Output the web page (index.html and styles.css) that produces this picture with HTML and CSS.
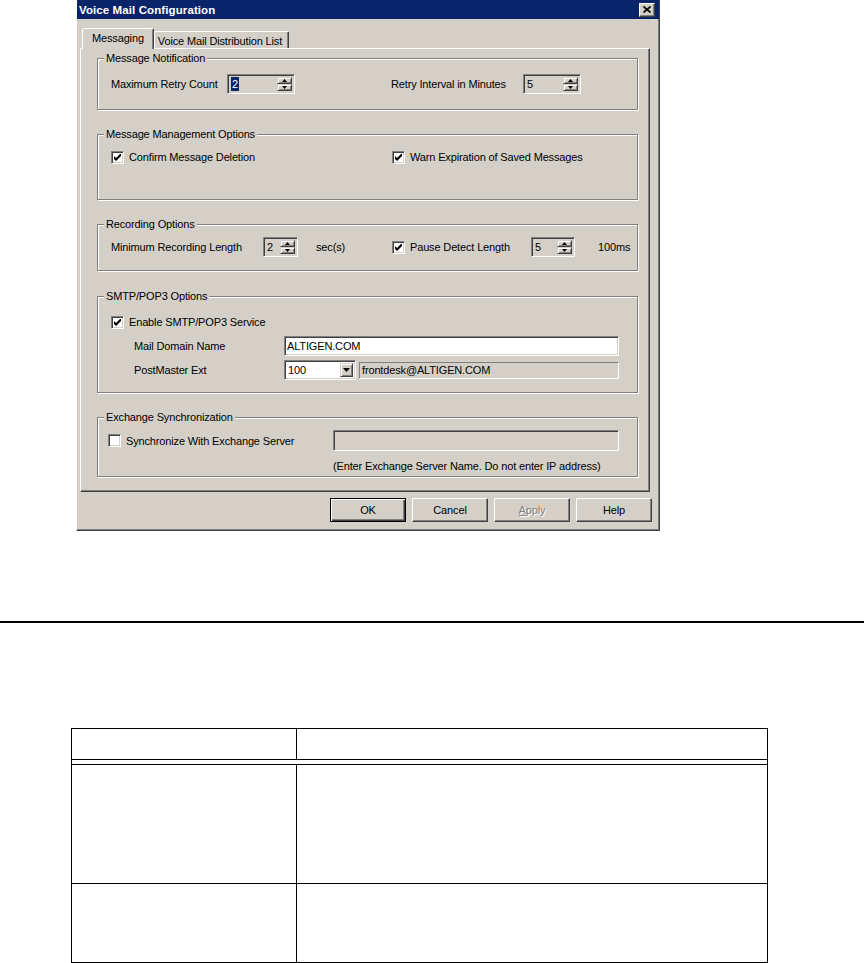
FILE: index.html
```html
<!DOCTYPE html>
<html lang="en">
<head>
  <meta charset="UTF-8">
  <title>Voice Mail Configuration</title>
  <link rel="stylesheet" href="styles.css">
</head>
<body>

<div class="dialog">
  <div class="titlebar">
    <span class="title">Voice Mail Configuration</span>
    <span class="close"><svg width="8" height="7" viewBox="0 0 8 7"><path d="M0.5 0.5L7.5 6.5M7.5 0.5L0.5 6.5" stroke="#000" stroke-width="1.7"/></svg></span>
  </div>

  <div class="tabs">
    <span class="tab active">Messaging</span>
    <span class="tab">Voice Mail Distribution List</span>
  </div>

  <div class="panel">
    <!-- Message Notification -->
    <div class="group g1">
      <span class="legend">Message Notification</span>
      <div class="row">
        <span class="retry-lbl">Maximum Retry Count</span>
        <span class="spin retry-spin">
          <span class="val"><span class="sel">2</span></span>
          <span class="arrows">
            <span class="sb"><svg width="5" height="3" viewBox="0 0 5 3"><path d="M0 3L2.5 0L5 3Z"/></svg></span>
            <span class="sb"><svg width="5" height="3" viewBox="0 0 5 3"><path d="M0 0L5 0L2.5 3Z"/></svg></span>
          </span>
        </span>
        <span class="interval-lbl">Retry Interval in Minutes</span>
        <span class="spin interval-spin">
          <span class="val">5</span>
          <span class="arrows">
            <span class="sb"><svg width="5" height="3" viewBox="0 0 5 3"><path d="M0 3L2.5 0L5 3Z"/></svg></span>
            <span class="sb"><svg width="5" height="3" viewBox="0 0 5 3"><path d="M0 0L5 0L2.5 3Z"/></svg></span>
          </span>
        </span>
      </div>
    </div>

    <!-- Message Management Options -->
    <div class="group g2">
      <span class="legend">Message Management Options</span>
      <div class="row">
        <span class="chk confirm">
          <span class="cb"><svg width="7" height="7" viewBox="0 0 7 7"><path d="M0 2L2 4L7 -1L7 2L2 7L0 5Z"/></svg></span>
          Confirm Message Deletion
        </span>
        <span class="chk">
          <span class="cb"><svg width="7" height="7" viewBox="0 0 7 7"><path d="M0 2L2 4L7 -1L7 2L2 7L0 5Z"/></svg></span>
          Warn Expiration of Saved Messages
        </span>
      </div>
    </div>

    <!-- Recording Options -->
    <div class="group g3">
      <span class="legend">Recording Options</span>
      <div class="row">
        <span class="minrec-lbl">Minimum Recording Length</span>
        <span class="spin minrec-spin">
          <span class="val">2</span>
          <span class="arrows">
            <span class="sb"><svg width="5" height="3" viewBox="0 0 5 3"><path d="M0 3L2.5 0L5 3Z"/></svg></span>
            <span class="sb"><svg width="5" height="3" viewBox="0 0 5 3"><path d="M0 0L5 0L2.5 3Z"/></svg></span>
          </span>
        </span>
        <span class="unit-sec">sec(s)</span>
        <span class="chk pause">
          <span class="cb"><svg width="7" height="7" viewBox="0 0 7 7"><path d="M0 2L2 4L7 -1L7 2L2 7L0 5Z"/></svg></span>
          Pause Detect Length
        </span>
        <span class="spin pause-spin">
          <span class="val">5</span>
          <span class="arrows">
            <span class="sb"><svg width="5" height="3" viewBox="0 0 5 3"><path d="M0 3L2.5 0L5 3Z"/></svg></span>
            <span class="sb"><svg width="5" height="3" viewBox="0 0 5 3"><path d="M0 0L5 0L2.5 3Z"/></svg></span>
          </span>
        </span>
        <span class="unit-ms">100ms</span>
      </div>
    </div>

    <!-- SMTP/POP3 Options -->
    <div class="group g4">
      <span class="legend">SMTP/POP3 Options</span>
      <div class="row first">
        <span class="chk">
          <span class="cb"><svg width="7" height="7" viewBox="0 0 7 7"><path d="M0 2L2 4L7 -1L7 2L2 7L0 5Z"/></svg></span>
          Enable SMTP/POP3 Service
        </span>
      </div>
      <div class="row sub">
        <span class="field-lbl">Mail Domain Name</span>
        <span class="edit domain">ALTIGEN.COM</span>
      </div>
      <div class="row sub">
        <span class="field-lbl">PostMaster Ext</span>
        <span class="combo">
          <span class="val">100</span>
          <span class="drop"><svg width="7" height="4" viewBox="0 0 7 4"><path d="M0 0L7 0L3.5 4Z"/></svg></span>
        </span>
        <span class="ro">frontdesk@ALTIGEN.COM</span>
      </div>
    </div>

    <!-- Exchange Synchronization -->
    <div class="group g5">
      <span class="legend">Exchange Synchronization</span>
      <div class="row sync">
        <span class="chk sync-chk">
          <span class="cb"></span>
          Synchronize With Exchange Server
        </span>
        <span class="edit disabled server"></span>
      </div>
      <div class="note">(Enter Exchange Server Name. Do not enter IP address)</div>
    </div>
  </div>

  <div class="buttons">
    <span class="btn default">OK</span>
    <span class="btn">Cancel</span>
    <span class="btn disabled"><u>A</u>pply</span>
    <span class="btn">Help</span>
  </div>
</div>

<div class="rule"></div>

<table class="params">
  <tr class="head"><th></th><th></th></tr>
  <tr class="gap"><td></td><td></td></tr>
  <tr class="r1"><td></td><td></td></tr>
  <tr class="r2"><td></td><td></td></tr>
</table>

</body>
</html>
```

FILE: styles.css
```css
*{box-sizing:border-box;}
body{margin:0;background:#fff;color:#000;font-family:"Liberation Sans",Arial,sans-serif;font-size:11px;}

/* window frame */
.dialog{margin-left:76px;width:584px;height:531px;background:#d4d0c8;border-left:1px solid #fff;border-right:1px solid #404040;border-bottom:1px solid #404040;box-shadow:inset -1px -1px 0 #808080;letter-spacing:-0.15px;}
.titlebar{height:19px;background:#0a246a;color:#fff;font-weight:bold;display:flex;align-items:center;justify-content:space-between;padding:0 4px 0 2px;}
.title{font-size:11.5px;letter-spacing:0.1px;}
.close{width:16px;height:14px;background:#d4d0c8;border:1px solid;border-color:#fff #404040 #404040 #fff;box-shadow:inset -1px -1px 0 #808080;display:flex;align-items:center;justify-content:center;}

/* tabs */
.tabs{display:flex;align-items:flex-end;height:29px;padding-left:5px;}
.tab{height:17px;padding:2px 6px 0 3px;border:1px solid;border-bottom:0;border-color:#fff #404040 transparent #fff;box-shadow:inset -1px 0 0 #808080;border-radius:2px 2px 0 0;display:flex;align-items:center;white-space:nowrap;}
.tab.active{height:21px;padding:0 9px 2px;margin-bottom:-1px;position:relative;z-index:1;background:#d4d0c8;}
.panel{margin-left:3px;width:570px;height:444px;border:1px solid;border-color:#fff #404040 #404040 #fff;box-shadow:inset -1px -1px 0 #808080;padding-left:16px;}

/* group boxes */
.group{width:541px;border:1px solid #808080;box-shadow:1px 1px 0 #fff,inset 1px 1px 0 #fff;}
.legend{display:block;width:max-content;margin:-7px 0 0 6px;padding:0 2px;background:#d4d0c8;line-height:13px;}
.g1{margin-top:9px;height:52px;}
.g2{margin-top:24px;height:66px;}
.g3{margin-top:24px;height:47px;}
.g4{margin-top:25px;height:97px;}
.g5{margin-top:24px;height:60px;}

.row{display:flex;align-items:center;height:20px;padding-left:13px;white-space:nowrap;}
.g1 .row{margin-top:9px;}
.g2 .row,.g3 .row{margin-top:6px;}
.g4 .row.first{margin-top:9px;}
.g4 .row.sub{margin-top:4px;padding-left:36px;}
.g5 .row{margin-top:6px;height:21px;padding-left:10px;}

.retry-lbl{width:116px;}
.retry-spin{width:68px;}
.interval-lbl{width:132px;margin-left:96px;}
.interval-spin{width:58px;}
.confirm{width:281px;}
.minrec-lbl{width:152px;}
.minrec-spin{width:35px;}
.unit-sec{width:76px;margin-left:18px;}
.pause{width:139px;}
.pause-spin{width:44px;}
.unit-ms{margin-left:23px;}
.field-lbl{width:150px;}
.sync-chk{width:225px;}

/* spin edit */
.spin{display:flex;height:20px;border:1px solid;border-color:#808080 #fff #fff #808080;box-shadow:inset 1px 1px 0 #404040,inset -1px -1px 0 #d4d0c8;background:#d4d0c8;padding:2px;}
.spin .val{flex:1;line-height:14px;padding-left:1px;}
.sel{display:inline-block;background:#0a246a;color:#fff;padding:0 1px;}
.arrows{display:flex;flex-direction:column;width:15px;}
.sb{flex:1;border:1px solid;border-color:#d4d0c8 #404040 #404040 #d4d0c8;box-shadow:inset 1px 1px 0 #fff,inset -1px -1px 0 #808080;display:flex;align-items:center;justify-content:center;}

/* checkbox */
.chk{display:flex;align-items:center;}
.cb{width:13px;height:13px;flex:none;margin-right:5px;background:#fff;border:1px solid;border-color:#808080 #fff #fff #808080;box-shadow:inset 1px 1px 0 #404040,inset -1px -1px 0 #d4d0c8;display:flex;align-items:center;justify-content:center;}

/* edits */
.edit{height:20px;display:flex;align-items:center;padding-left:2px;background:#fff;border:1px solid;border-color:#808080 #fff #fff #808080;box-shadow:inset 1px 1px 0 #404040,inset -1px -1px 0 #d4d0c8;}
.edit.disabled{background:#d4d0c8;}
.domain{width:335px;}
.server{width:286px;height:21px;}
.combo{width:72px;height:20px;display:flex;padding:2px;background:#fff;border:1px solid;border-color:#808080 #fff #fff #808080;box-shadow:inset 1px 1px 0 #404040,inset -1px -1px 0 #d4d0c8;}
.combo .val{flex:1;line-height:14px;padding-left:1px;}
.drop{width:13px;background:#d4d0c8;border:1px solid;border-color:#d4d0c8 #404040 #404040 #d4d0c8;box-shadow:inset 1px 1px 0 #fff,inset -1px -1px 0 #808080;display:flex;align-items:center;justify-content:center;}
.ro{width:260px;height:17px;margin-left:3px;padding-left:2px;display:flex;align-items:center;border:1px solid;border-color:#808080 #fff #fff #808080;}
.note{margin:9px 0 0 235px;line-height:13px;}

/* buttons */
.buttons{display:flex;justify-content:flex-end;gap:6px;margin-top:6px;padding-right:7px;}
.btn{width:76px;height:24px;display:flex;align-items:center;justify-content:center;background:#d4d0c8;border:1px solid;border-color:#fff #404040 #404040 #fff;box-shadow:inset -1px -1px 0 #808080;}
.btn.default{border-color:#000;box-shadow:inset 1px 1px 0 #fff,inset -1px -1px 0 #404040,inset -2px -2px 0 #808080;}
.btn.disabled{color:#808080;text-shadow:1px 1px 0 #fff;}

/* document part */
.rule{height:2px;background:#000;margin-top:90px;}
.params{margin:105px 0 0 71px;width:697px;border-collapse:separate;border-spacing:0;border-top:1px solid #000;border-left:1px solid #000;}
.params th,.params td{padding:0;border-right:1px solid #000;border-bottom:1px solid #000;}
.params th:first-child,.params td:first-child{width:225px;}
.head th{height:31px;}
.gap td{height:4px;border-bottom:0;}
.gap td:first-child{border-right:0;}
.r1 td{height:120px;border-top:1px solid #000;}
.r2 td{height:79px;}
```
